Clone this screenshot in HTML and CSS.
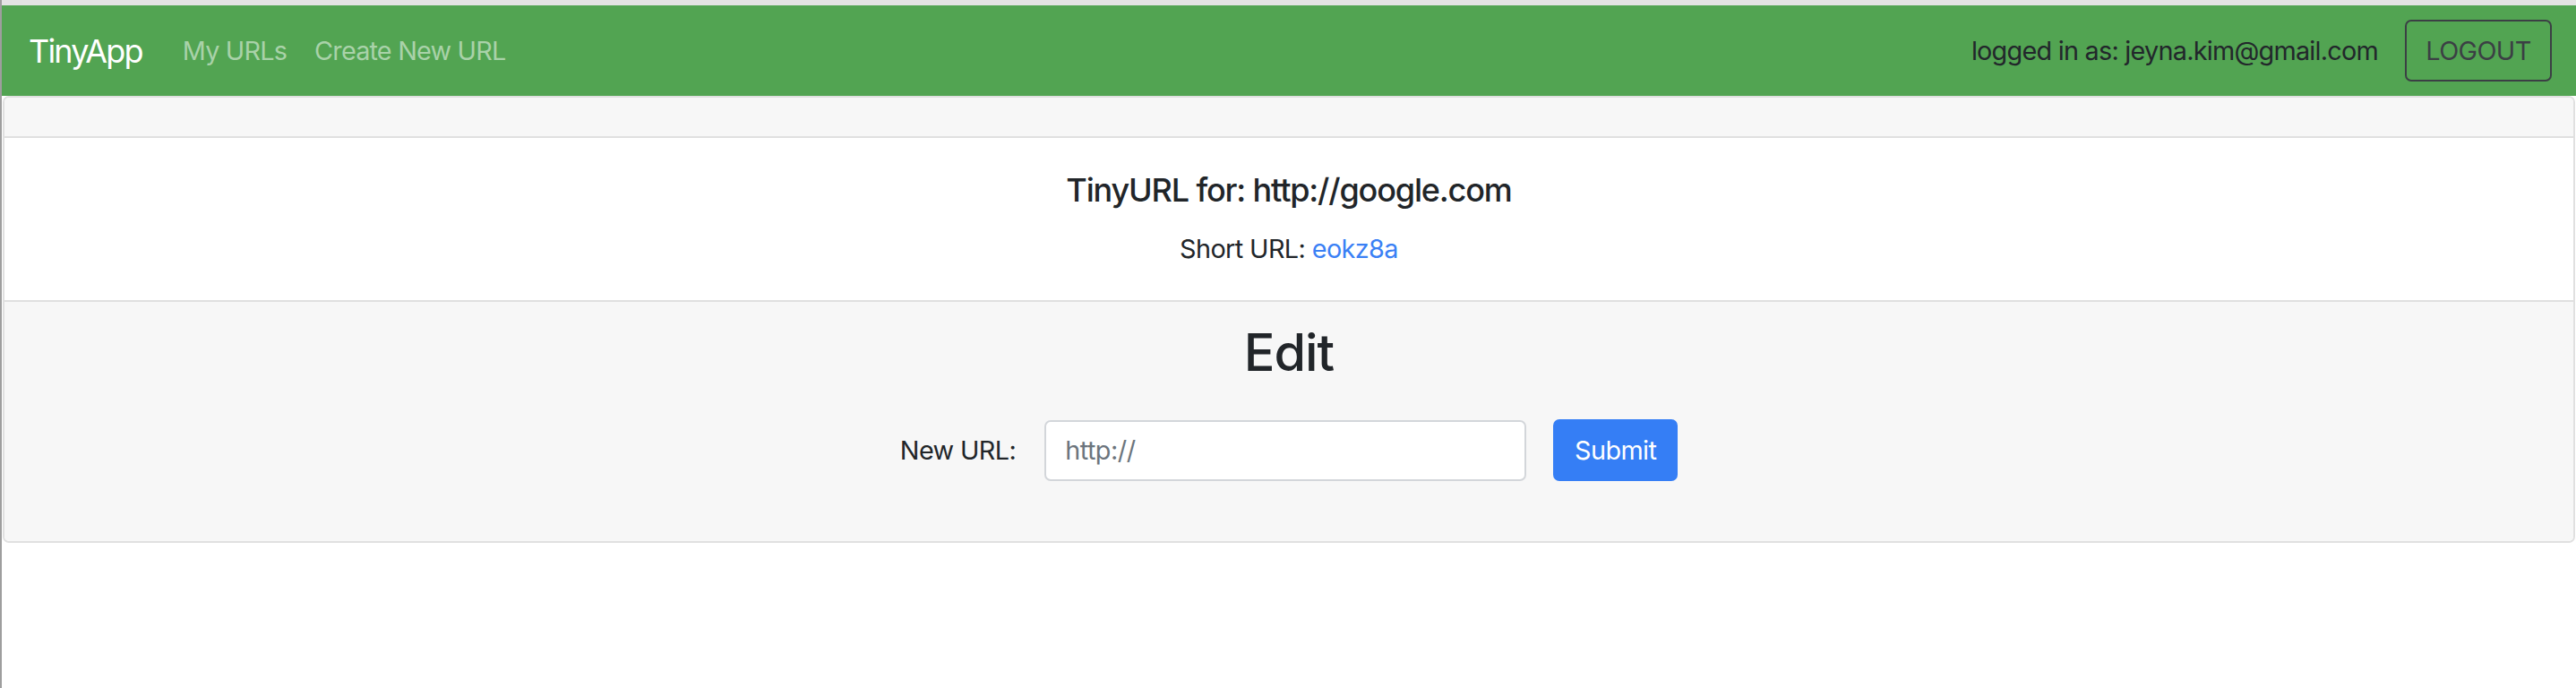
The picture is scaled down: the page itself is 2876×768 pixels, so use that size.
FILE: index.html
```html
<!DOCTYPE html>
<html lang="en">
<head>
<meta charset="utf-8">
<title>TinyApp</title>
<link rel="stylesheet" href="styles.css">
</head>
<body>
<div class="topstrip"></div>
<nav class="navbar">
  <div class="nav-left">
    <a class="brand" href="#">TinyApp</a>
    <a class="nav-link" href="#">My URLs</a>
    <a class="nav-link" href="#">Create New URL</a>
  </div>
  <div class="nav-right">
    <span class="nav-text">logged in as: jeyna.kim@gmail.com</span>
    <button class="btn-logout" type="button">LOGOUT</button>
  </div>
</nav>
<main class="card">
  <div class="card-header"></div>
  <div class="card-body">
    <h5 class="card-title">TinyURL for: http://google.com</h5>
    <p class="card-text">Short URL: <a class="short-link" href="#">eokz8a</a></p>
  </div>
  <div class="card-footer">
    <h2 class="edit-title">Edit</h2>
    <form class="edit-form">
      <label class="form-label" for="newurl">New URL:</label>
      <input class="form-input" id="newurl" type="text" placeholder="http://">
      <button class="btn-submit" type="submit">Submit</button>
    </form>
  </div>
</main>
</body>
</html>
```
FILE: styles.css
```css
* { box-sizing: border-box; }

html, body {
  margin: 0;
  padding: 0;
  background: #ffffff;
}

body {
  font-family: "Inter", "Noto Sans", "Liberation Sans", sans-serif;
  color: #212529;
  border-left: 2px solid #9e9e9e;
  min-height: 768px;
}

.topstrip {
  height: 6px;
  background: #e3e3e3;
}

.navbar {
  height: 101px;
  background: #52a452;
  display: flex;
  align-items: center;
  justify-content: space-between;
  padding: 0 27px 0 30px;
}

.nav-left, .nav-right {
  display: flex;
  align-items: center;
}

.brand {
  font-size: 36px;
  color: #ffffff;
  text-decoration: none;
  margin-right: 45px;
  letter-spacing: -1.8px;
}

.nav-link {
  font-size: 28.8px;
  color: #a9d2a9;
  text-decoration: none;
  margin-right: 31px;
  letter-spacing: -0.8px;
}

.nav-text {
  font-size: 28.8px;
  color: #22272b;
  margin-right: 30px;
  letter-spacing: -0.75px;
}

.btn-logout {
  height: 69px;
  width: 164px;
  background: transparent;
  border: 2px solid #3b3f44;
  border-radius: 7px;
  font-family: inherit;
  font-size: 28.8px;
  color: #3b3f44;
  padding: 0;
  letter-spacing: -0.6px;
}

.card {
  display: block;
  margin: 0 1px;
  border: 2px solid #e0e0e0;
  border-radius: 7px;
  overflow: hidden;
}

.card-header {
  height: 45px;
  background: #f7f7f7;
  border-bottom: 2px solid #e0e0e0;
}

.card-body {
  background: #ffffff;
  text-align: center;
  padding: 37px 36px 36px;
  border-bottom: 2px solid #e0e0e0;
}

.card-title {
  margin: 0 0 22px;
  font-size: 36px;
  line-height: 43px;
  font-weight: 500;
  letter-spacing: -1.15px;
}

.card-text {
  margin: 0;
  font-size: 28.8px;
  line-height: 43px;
  letter-spacing: -0.6px;
}

.short-link {
  color: #3a80f5;
  text-decoration: none;
}

.card-footer {
  background: #f7f7f7;
  text-align: center;
  padding: 22px 36px 67px;
}

.edit-title {
  margin: 0 0 40px;
  font-size: 57.6px;
  line-height: 69px;
  font-weight: 500;
  letter-spacing: -1px;
}

.edit-form {
  display: flex;
  justify-content: center;
  align-items: center;
}

.form-label {
  font-size: 28.8px;
  margin-right: 32px;
  letter-spacing: -0.6px;
}

.form-input {
  width: 538px;
  height: 68px;
  border: 2px solid #d3d6da;
  border-radius: 7px;
  background: #ffffff;
  padding: 0 21px;
  font-family: inherit;
  font-size: 28.8px;
  color: #495057;
  margin-right: 30px;
  letter-spacing: -0.5px;
}

.form-input::placeholder {
  color: #6c757d;
}

.btn-submit {
  width: 139px;
  height: 69px;
  border: none;
  border-radius: 7px;
  background: #357ef5;
  color: #ffffff;
  font-family: inherit;
  font-size: 28.8px;
  padding: 0;
  letter-spacing: -0.6px;
}
```
